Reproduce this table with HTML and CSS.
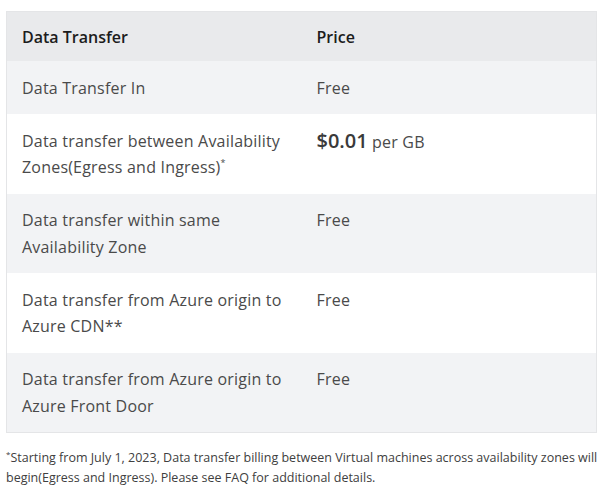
FILE: index.html
```html
<!DOCTYPE html>
<html>
<head>
<meta charset="utf-8">
<link rel="stylesheet" href="styles.css">
</head>
<body>
<div class="wrap">
<table class="pricing">
  <colgroup><col class="c1"><col class="c2"></colgroup>
  <thead>
    <tr><th>Data Transfer</th><th>Price</th></tr>
  </thead>
  <tbody>
    <tr class="alt"><td>Data Transfer In</td><td>Free</td></tr>
    <tr><td>Data transfer between Availability Zones(Egress and Ingress)<sup>*</sup></td><td><span class="amount">$0.01</span> per GB</td></tr>
    <tr class="alt"><td>Data transfer within same Availability Zone</td><td>Free</td></tr>
    <tr><td>Data transfer from Azure origin to Azure CDN**</td><td>Free</td></tr>
    <tr class="alt"><td>Data transfer from Azure origin to Azure Front Door</td><td>Free</td></tr>
  </tbody>
</table>
<p class="note"><sup>*</sup>Starting from July 1, 2023, Data transfer billing between Virtual machines across availability zones will begin(Egress and Ingress). Please see FAQ for additional details.</p>
</div>
</body>
</html>
```
FILE: styles.css
```css
html, body { margin: 0; background: #fff; }
body {
  font-family: "Open Sans", "Noto Sans", sans-serif;
  color: #4a4a4a;
}
.wrap { padding: 11px 4px 0 6px; }
.pricing {
  width: 591px;
  table-layout: fixed;
  border-collapse: collapse;
  border: 1px solid #e4e5e7;
  font-size: 16px;
  line-height: 26.5px;
}
.pricing col.c1 { width: 295px; }
.pricing th, .pricing td {
  text-align: left;
  vertical-align: top;
  padding: 13.5px 15px 13px 15px;
}
.pricing td { letter-spacing: 0.2px; }
.pricing th {
  background: #e9eaec;
  font-weight: 600;
  color: #1c1c1c;
  padding-top: 11.5px;
  padding-bottom: 11px;
}
.pricing tr.alt td { background: #f2f3f5; }
.pricing sup { font-size: 9px; line-height: 0; vertical-align: 7px; }
.amount { font-size: 20px; font-weight: 600; color: #3a3a3a; letter-spacing: 0; }
.note {
  margin: 15px 0 0 0;
  font-size: 12.5px;
  line-height: 20px;
  color: #404040;
}
.note sup { font-size: 8px; line-height: 0; vertical-align: 5px; }
```
